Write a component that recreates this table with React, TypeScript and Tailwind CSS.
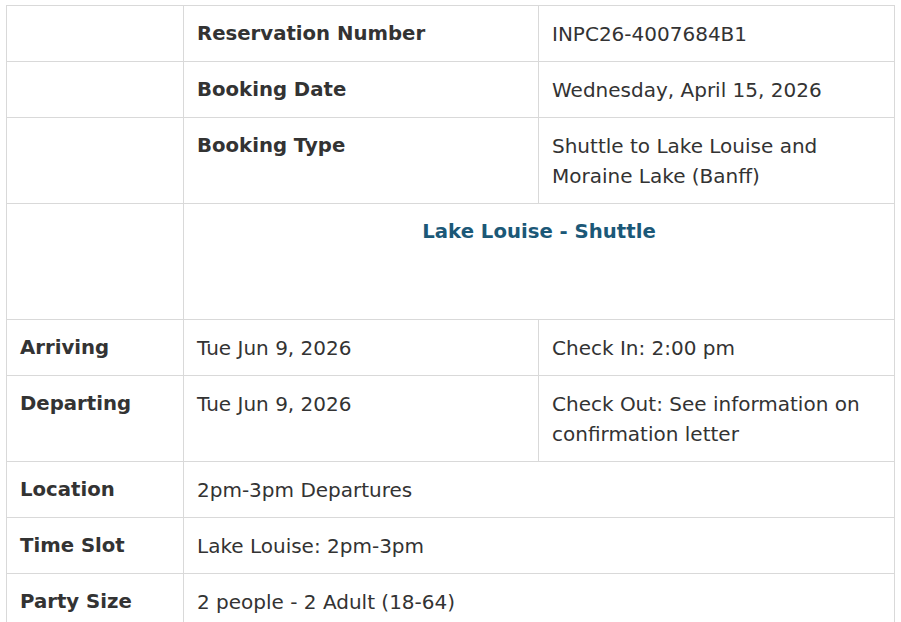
const rows = [
  { label: "", key: "Reservation Number", value: "INPC26-4007684B1" },
  { label: "", key: "Booking Date", value: "Wednesday, April 15, 2026" },
  { label: "", key: "Booking Type", value: "Shuttle to Lake Louise and Moraine Lake (Banff)" },
]

const bottom = [
  { label: "Location", value: "2pm-3pm Departures" },
  { label: "Time Slot", value: "Lake Louise: 2pm-3pm" },
  { label: "Party Size", value: "2 people - 2 Adult (18-64)" },
]

const cell = "border border-[#d9d9d9] px-[13px] pt-[13px] pb-[12px] align-top"

export default function App() {
  return (
    <div className="min-h-screen bg-white pl-[6px] pt-[5px] text-[#333] text-[20px] leading-[30px] font-['DejaVu_Sans',Verdana,sans-serif]">
      <table className="w-[888px] table-fixed border-collapse">
        <colgroup>
          <col className="w-[177px]" />
          <col className="w-[355px]" />
          <col className="w-[356px]" />
        </colgroup>
        <tbody>
          {rows.map((r) => (
            <tr key={r.key}>
              <td className={cell}>{r.label}</td>
              <td className={`${cell} font-bold text-[19.7px]`}>{r.key}</td>
              <td className={cell}>{r.value}</td>
            </tr>
          ))}
          <tr>
            <td className={cell}></td>
            <td colSpan={2} className={`${cell} h-[116px] text-center font-bold text-[19.7px] text-[#1b5877]`}>
              Lake Louise - Shuttle
            </td>
          </tr>
          <tr>
            <td className={`${cell} font-bold text-[19.7px]`}>Arriving</td>
            <td className={cell}>Tue Jun 9, 2026</td>
            <td className={cell}>Check In: 2:00 pm</td>
          </tr>
          <tr>
            <td className={`${cell} font-bold text-[19.7px]`}>Departing</td>
            <td className={cell}>Tue Jun 9, 2026</td>
            <td className={cell}>Check Out: See information on confirmation letter</td>
          </tr>
          {bottom.map((r) => (
            <tr key={r.label}>
              <td className={`${cell} font-bold text-[19.7px]`}>{r.label}</td>
              <td colSpan={2} className={cell}>{r.value}</td>
            </tr>
          ))}
        </tbody>
      </table>
    </div>
  )
}
